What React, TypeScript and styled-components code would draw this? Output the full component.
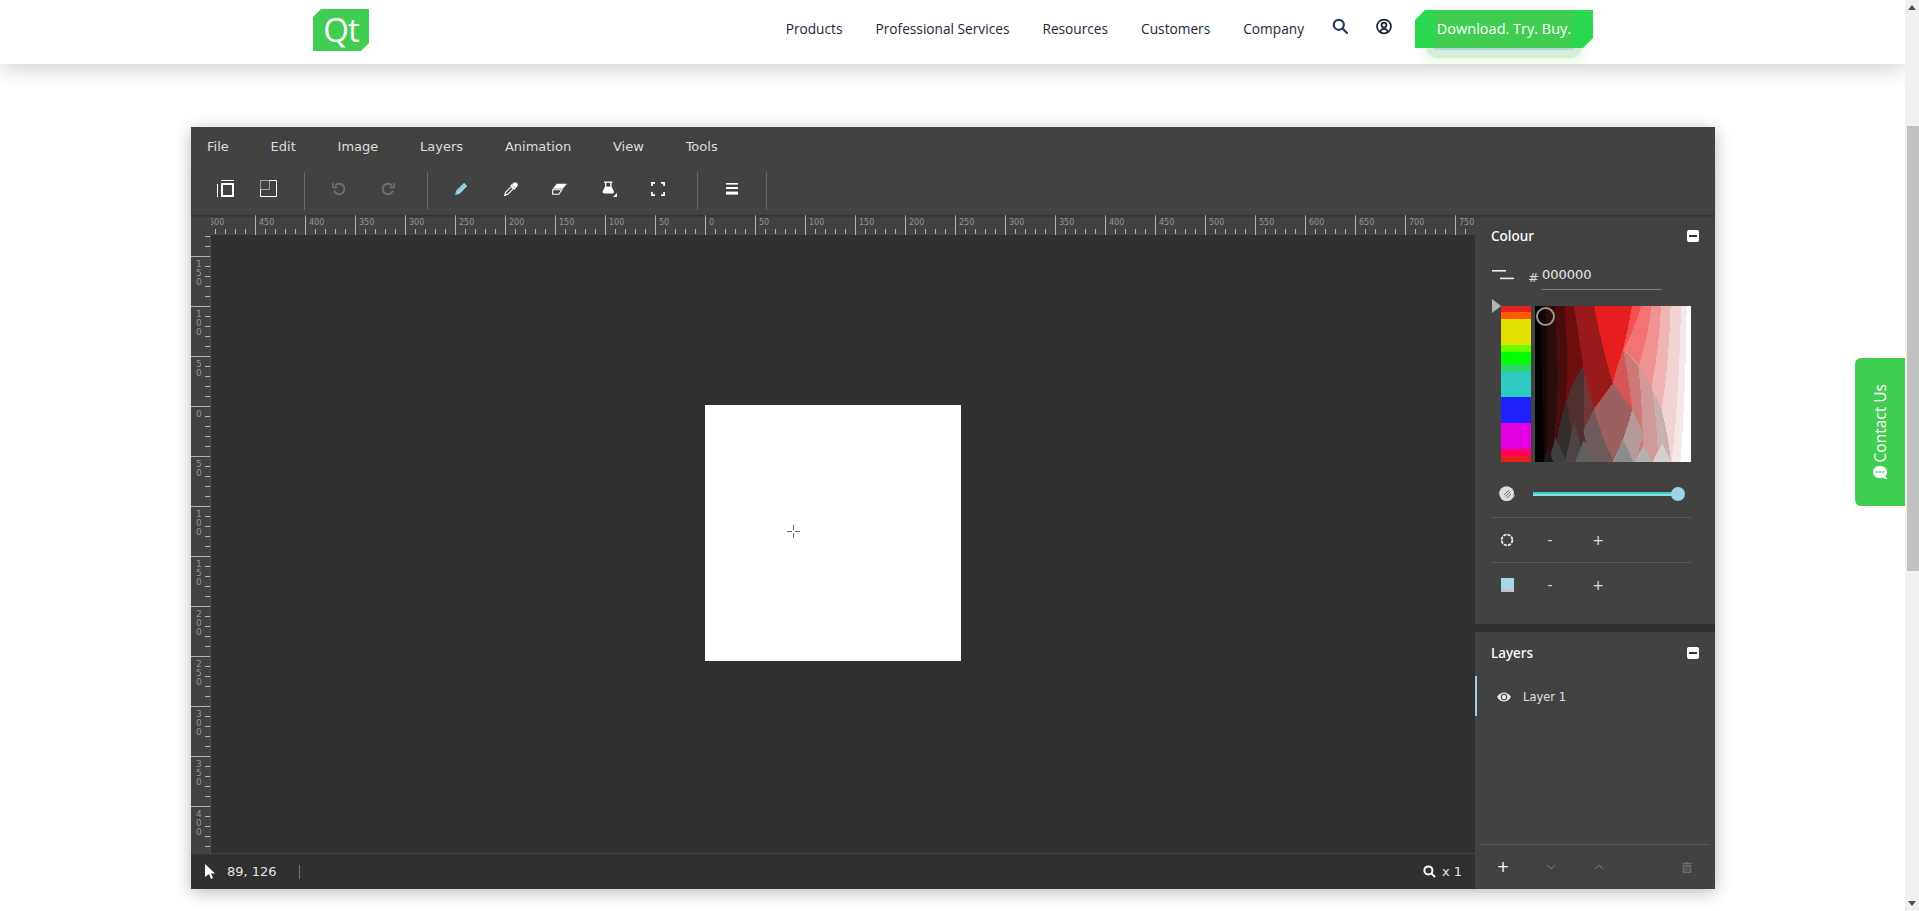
import React from "react";
import styled, { createGlobalStyle } from "styled-components";

const GlobalStyle = createGlobalStyle`
  html, body {
    margin: 0;
    height: 100%;
    overflow: hidden;
    background: #fff;
  }
`;

const NAV = ["Products", "Professional Services", "Resources", "Customers", "Company"];
const MENU = ["File", "Edit", "Image", "Layers", "Animation", "View", "Tools"];

const H_LABELS = [500, 450, 400, 350, 300, 250, 200, 150, 100, 50, 0, 50, 100, 150, 200, 250, 300, 350, 400, 450, 500, 550, 600, 650, 700, 750];
const V_LABELS = [200, 150, 100, 50, 0, 50, 100, 150, 200, 250, 300, 350, 400];

const HUES: [string, number][] = [
  ["#e6201c", 6],
  ["#ff5c00", 7],
  ["#e2e200", 26],
  ["#66ff00", 7],
  ["#00ff00", 12],
  ["#2ed85a", 7],
  ["#2ecbc0", 26],
  ["#2020ff", 26],
  ["#e000e0", 26],
  ["#ff0060", 7],
  ["#e6201c", 6],
];

// posterised saturation / value square, painted back to front
const SV_SHAPES: [string, string][] = [
  ["#ffffff", "M0 0H468V468H0Z"],
  ["#f6e8e8", "M0 0H455Q452 280 436 468H0Z"],
  ["#f0d4d4", "M0 0H438Q432 280 410 468H0Z"],
  ["#f0b4b4", "M0 0H407Q402 170 380 312V468H0Z"],
  ["#ef9292", "M0 0H378Q372 130 350 242V468H0Z"],
  ["#f37272", "M0 0H350Q338 100 310 182V468H0Z"],
  ["#f45050", "M0 0H318Q298 70 265 132V468H0Z"],
  ["#e61e1e", "M0 0H291Q272 120 233 232V468H0Z"],
  ["#981a1a", "M0 0H177Q198 110 233 232L175 310V468H0Z"],
  ["#6e0f0f", "M0 0H117Q132 90 145 182L100 300L80 468H0Z"],
  ["#4a0c0c", "M0 0H88Q102 170 92 280L62 468H0Z"],
  ["#2a0d0d", "M0 0H60Q72 180 66 300L52 468H0Z"],
  ["#120606", "M0 0H33Q40 200 34 468H0Z"],
  ["#000000", "M0 0H15L27 468H0Z"],
  // left lobe
  ["#4e3030", "M145 182Q112 225 95 282Q68 370 55 468H235L177 310Q160 250 145 182Z"],
  ["#713636", "M145 182Q150 250 147 372L177 310Q160 250 145 182Z"],
  // right lobe, outer band first
  ["#c9b0b0", "M265 132Q330 190 380 312Q400 390 408 468H233V232Q245 180 265 132Z"],
  ["#d09a9a", "M265 132Q310 160 350 242Q365 330 370 468H233V232Q245 180 265 132Z"],
  ["#cf7878", "M265 132Q290 155 310 182Q322 280 325 468H233V232Q245 180 265 132Z"],
  ["#d65656", "M265 132Q282 220 292 310L233 400V232Q245 180 265 132Z"],
  // centre lozenge and what sits below it
  ["#b49a9a", "M292 310L326 385L300 468H235Z"],
  ["#9c6060", "M233 232L292 310Q270 400 235 462Q195 390 177 310Z"],
  ["#6e5a5a", "M177 310Q198 390 235 462V468H165L145 372Z"],
  // lower greys
  ["#352c2c", "M95 282Q70 370 55 468H112Q112 380 95 282Z"],
  ["#3e3e3e", "M62 395L40 468H95Z"],
  ["#1a1a1a", "M36 420L27 468H55Z"],
  ["#4c4444", "M118 345L90 468H148Z"],
  ["#606060", "M147 400L120 468H175Z"],
  ["#8c8c8c", "M265 402L235 468H295Z"],
  ["#b2b2b2", "M325 418L298 468H352Z"],
  ["#d4d0d0", "M382 412L352 468H410Z"],
];

export default function App() {
  return (
    <Page>
      <GlobalStyle />
      <Header>
        <Logo>Qt</Logo>
        <Nav>
          {NAV.map((item) => (
            <NavLink key={item}>{item}</NavLink>
          ))}
        </Nav>
        <HeaderIcon>
          <svg width="16" height="16" viewBox="0 0 16 16" fill="none" stroke="#2c3763" strokeWidth="2.2">
            <circle cx="6.8" cy="6.8" r="5" />
            <path d="M10.6 10.6L15 15" strokeLinecap="round" />
          </svg>
        </HeaderIcon>
        <HeaderIcon>
          <svg width="17" height="17" viewBox="0 0 17 17" fill="none" stroke="#1b2138" strokeWidth="1.8">
            <circle cx="8.5" cy="8.5" r="7.4" />
            <circle cx="8.5" cy="7" r="2.6" />
            <path d="M4.6 14C5.4 11.6 6.8 11 8.5 11S11.6 11.6 12.4 14" />
          </svg>
        </HeaderIcon>
        <CtaWrap>
          <Cta>Download. Try. Buy.</Cta>
        </CtaWrap>
      </Header>

      <Editor>
        <MenuBar>
          {MENU.map((item) => (
            <MenuItem key={item}>{item}</MenuItem>
          ))}
        </MenuBar>
        <Toolbar>
          <ToolGroup $width={114} $pad={13}>
            <ToolButton $size={43}>
              <svg width="17" height="17" viewBox="0 0 17 17" fill="none" stroke="#fff">
                <path d="M4 0.5H17M0.5 4V17" />
                <rect x="5" y="4" width="11" height="12" strokeWidth="2" />
              </svg>
            </ToolButton>
            <ToolButton $size={43}>
              <svg width="17" height="17" viewBox="0 0 17 17" fill="none" stroke="#fff">
                <path d="M9.5 0.5H16.5V16.5H0.5V9.5" />
                <path d="M0.5 0.5H9.5V9.5H0.5Z" strokeDasharray="1 1" />
              </svg>
            </ToolButton>
          </ToolGroup>
          <ToolGroup $width={123} $pad={9}>
            <ToolButton>
              <svg width="14" height="14" viewBox="0 0 14 14" fill="none" stroke="#707070" strokeWidth="2">
                <path d="M3.2 3.6A5.2 5.2 0 1 1 2.2 8.5" />
                <path d="M1 1V5.4H5.4" strokeWidth="1.6" />
              </svg>
            </ToolButton>
            <ToolButton>
              <svg width="14" height="14" viewBox="0 0 14 14" fill="none" stroke="#707070" strokeWidth="2">
                <path d="M10.8 3.6A5.2 5.2 0 1 0 11.8 8.5" />
                <path d="M13 1V5.4H8.6" strokeWidth="1.6" />
              </svg>
            </ToolButton>
          </ToolGroup>
          <ToolGroup $width={270} $pad={9}>
            <ToolButton>
              <svg width="13" height="13" viewBox="0 0 14 14">
                <path d="M0.5 13.5L1.6 9.4L9.8 1.2L13 4.4L4.8 12.6Z" fill="#a6d9ea" stroke="#52c6de" strokeWidth="0.8" />
                <path d="M3.4 10.2L10.4 3.2" stroke="#5b93a6" strokeWidth="0.7" />
              </svg>
            </ToolButton>
            <ToolButton>
              <svg width="14" height="14" viewBox="0 0 14 14">
                <path d="M8 2.6C9.6 0 11.6 -0.4 13 1S14.2 4.4 11.4 6Z" fill="#fff" />
                <path d="M6.8 2.8L11.2 7.2" stroke="#fff" strokeWidth="1.6" />
                <path d="M7.4 4.6L1.8 10.2L0.6 13.4L3.8 12.2L9.4 6.6Z" fill="#424242" stroke="#fff" strokeWidth="1.2" />
              </svg>
            </ToolButton>
            <ToolButton>
              <svg width="15" height="12" viewBox="0 0 14 11">
                <path d="M4.4 0.5H14L10 5.2H0.6Z" fill="#fff" />
                <path d="M0.6 6.2H9.2L6.4 10.4H0.6Z" fill="#424242" stroke="#fff" />
              </svg>
            </ToolButton>
            <ToolButton $nudge={2}>
              <svg width="16" height="16" viewBox="0 0 16 16">
                <path d="M2 0.5H10.5V1.8H9.5V5.6L11.8 10.2C12.3 11.2 11.6 12.4 10.5 12.4H2C0.9 12.4 0.2 11.2 0.7 10.2L3 5.6V1.8H2Z" fill="#fff" />
                <path d="M4.3 1.8H8.2V5.6H4.3Z" fill="#424242" />
                <path d="M15 12V16H11Z" fill="#fff" />
              </svg>
            </ToolButton>
            <ToolButton>
              <svg width="14" height="14" viewBox="0 0 14 14" fill="none" stroke="#fff" strokeWidth="1.7">
                <path d="M0.9 4V0.9H4M10 0.9H13.1V4M13.1 10V13.1H10M4 13.1H0.9V10" />
              </svg>
            </ToolButton>
          </ToolGroup>
          <ToolGroup $width={69} $pad={10}>
            <ToolButton>
              <svg width="13" height="12" viewBox="0 0 13 12" fill="#fff">
                <rect x="0" y="0" width="12" height="1.6" />
                <rect x="0" y="4" width="12" height="2" />
                <rect x="0" y="8.6" width="12" height="3" />
              </svg>
            </ToolButton>
          </ToolGroup>
        </Toolbar>

        <Workspace>
          <Stage>
            <HRuler>
              <HTrack>
                {H_LABELS.map((value, i) => (
                  <HCell key={i}>{value}</HCell>
                ))}
              </HTrack>
            </HRuler>
            <StageBody>
              <VRuler>
                <VTrack>
                  {V_LABELS.map((value, i) => (
                    <VCell key={i}>
                      <VLabel>{value}</VLabel>
                    </VCell>
                  ))}
                </VTrack>
              </VRuler>
              <Viewport>
                <Canvas>
                  <Crosshair>
                    <svg width="13" height="13" viewBox="0 0 13 13" stroke="#667" strokeWidth="1">
                      <path d="M6.5 0V5M6.5 8V13M0 6.5H5M8 6.5H13" />
                    </svg>
                  </Crosshair>
                </Canvas>
              </Viewport>
            </StageBody>
            <StatusBar>
              <svg width="10" height="15" viewBox="0 0 10 15" fill="#fff">
                <path d="M0 0L10 9.4H6L8 14L6 15L4 10L0 13Z" />
              </svg>
              <Coords>89, 126</Coords>
              <StatusDivider />
              <ZoomInfo>
                <svg width="13" height="13" viewBox="0 0 13 13" fill="none" stroke="#fff" strokeWidth="2">
                  <circle cx="5.4" cy="5.4" r="4" />
                  <path d="M8.4 8.4L12 12" />
                </svg>
                x 1
              </ZoomInfo>
            </StatusBar>
          </Stage>

          <Panel>
            <ColourSection>
              <SectionHeader>
                <SectionTitle>Colour</SectionTitle>
                <Collapse />
              </SectionHeader>
              <HexRow>
                <svg width="22" height="10" viewBox="0 0 22 10" fill="#eee">
                  <rect x="0" y="0" width="14" height="1.6" />
                  <rect x="8" y="7.6" width="14" height="1.6" />
                </svg>
                <Hash>#</Hash>
                <HexValue>000000</HexValue>
              </HexRow>
              <PickerRow>
                <HueArrow />
                <HueStrip>
                  {HUES.map(([colour, height], i) => (
                    <HueBand key={i} $colour={colour} $height={height} />
                  ))}
                </HueStrip>
                <SvSquare>
                  <svg width="156" height="156" viewBox="0 0 468 468" shapeRendering="crispEdges">
                    {SV_SHAPES.map(([fill, d], i) => (
                      <path key={i} fill={fill} d={d} />
                    ))}
                  </svg>
                  <SvMarker />
                </SvSquare>
              </PickerRow>
              <SliderRow>
                <IconCell>
                  <svg width="16" height="16" viewBox="0 0 16 16">
                    <circle cx="7.6" cy="7.6" r="7.4" fill="#dcdcdc" />
                    <path d="M2.4 12.6A8 8 0 0 0 15.4 9" stroke="#dcdcdc" strokeWidth="1" fill="none" />
                    <path d="M5 9L10 4M6.5 10.5L11.5 5.5M8 12L12 8" stroke="#6a6a6a" strokeWidth="1" />
                  </svg>
                </IconCell>
                <SliderTrack>
                  <SliderKnob />
                </SliderTrack>
              </SliderRow>
              <StepRow $divided>
                <IconCell>
                  <svg width="14" height="14" viewBox="0 0 14 14" fill="none" stroke="#eee">
                    <circle cx="7" cy="7" r="5.4" strokeWidth="1.8" strokeDasharray="3.2 1" />
                  </svg>
                </IconCell>
                <StepButton>-</StepButton>
                <StepButton>+</StepButton>
              </StepRow>
              <StepRow>
                <IconCell>
                  <BrushSwatch />
                </IconCell>
                <StepButton>-</StepButton>
                <StepButton>+</StepButton>
              </StepRow>
            </ColourSection>

            <LayersSection>
              <SectionHeader>
                <SectionTitle>Layers</SectionTitle>
                <Collapse />
              </SectionHeader>
              <LayerRow>
                <svg width="14" height="10" viewBox="0 0 14 10" fill="#e8e8e8">
                  <path d="M0 5C2 2 4.4 0.4 7 0.4S12 2 14 5C12 8 9.6 9.6 7 9.6S2 8 0 5ZM7 1.8A3.2 3.2 0 1 0 7 8.2A3.2 3.2 0 1 0 7 1.8Z" fillRule="evenodd" />
                  <circle cx="7" cy="5" r="2.2" />
                </svg>
                <LayerName>Layer 1</LayerName>
              </LayerRow>
              <LayerFooter>
                <FooterButton $on>+</FooterButton>
                <FooterButton>
                  <svg width="10" height="6" viewBox="0 0 10 6" fill="none" stroke="#6c6c6c" strokeWidth="1.2">
                    <path d="M1 1L5 5L9 1" />
                  </svg>
                </FooterButton>
                <FooterButton>
                  <svg width="10" height="6" viewBox="0 0 10 6" fill="none" stroke="#6c6c6c" strokeWidth="1.2">
                    <path d="M1 5L5 1L9 5" />
                  </svg>
                </FooterButton>
                <FooterSpacer />
                <FooterButton>
                  <svg width="10" height="11" viewBox="0 0 10 11" fill="#6c6c6c">
                    <path d="M3.5 0H6.5V1H10V2H0V1H3.5Z" />
                    <path d="M0.8 2.8H9.2V11H0.8ZM2.6 4V10H3.6V4ZM4.5 4V10H5.5V4ZM6.4 4V10H7.4V4Z" fillRule="evenodd" />
                  </svg>
                </FooterButton>
              </LayerFooter>
            </LayersSection>
          </Panel>
        </Workspace>
      </Editor>

      <ContactTab>
        <ContactLabel>Contact Us</ContactLabel>
        <svg width="15" height="14" viewBox="0 0 15 14">
          <path d="M7 0C10.8 0 14 2.6 14 6C14 7.6 13.4 9 12.2 10L14.6 13.4L9.6 11.7C8.8 11.9 7.9 12 7 12C3.2 12 0 9.4 0 6S3.2 0 7 0Z" fill="#fff" />
          <circle cx="3.8" cy="6" r="1" fill="#41cd52" />
          <circle cx="7" cy="6" r="1" fill="#41cd52" />
          <circle cx="10.2" cy="6" r="1" fill="#41cd52" />
        </svg>
      </ContactTab>

      <ScrollRail>
        <ScrollArrow $dir="up" />
        <ScrollThumb />
        <ScrollArrow $dir="down" />
      </ScrollRail>
    </Page>
  );
}

const Page = styled.div`
  height: 911px;
  padding-right: 14px;
  background: #fff;
  font-family: "DejaVu Sans", sans-serif;
`;

const Header = styled.header`
  height: 64px;
  box-sizing: border-box;
  padding: 0 312px 0 313px;
  display: flex;
  align-items: center;
  background: #fff;
  box-shadow: 0 4px 22px rgba(50, 55, 70, 0.24);
`;

const Logo = styled.div`
  width: 56px;
  height: 42px;
  margin-top: -4px;
  display: flex;
  align-items: center;
  justify-content: center;
  background: #41cd52;
  color: #fff;
  font: 500 33px/42px "Open Sans", sans-serif;
  letter-spacing: -1px;
  clip-path: polygon(8px 0, 100% 0, 100% calc(100% - 8px), calc(100% - 8px) 100%, 0 100%, 0 8px);
`;

const Nav = styled.nav`
  margin: -7px 0 0 auto;
  display: flex;
  gap: 33px;
`;

const NavLink = styled.a`
  font: 400 13.7px/20px "Open Sans", sans-serif;
  color: #23273a;
`;

const HeaderIcon = styled.span`
  width: 16px;
  height: 17px;
  margin-left: 28px;
  margin-top: -11px;
  display: flex;
`;

const CtaWrap = styled.div`
  position: relative;
  margin: -6px 0 0 23px;

  &::before {
    content: "";
    position: absolute;
    left: 15px;
    right: 15px;
    top: 8px;
    bottom: -2px;
    border-radius: 8px;
    background: #a8d8e0;
    box-shadow: 0 4px 0 4px #d5ecd5, 0 3px 10px 10px rgba(65, 205, 82, 0.12);
  }
`;

const Cta = styled.div`
  position: relative;
  width: 178px;
  height: 38px;
  display: flex;
  align-items: center;
  justify-content: center;
  font: 500 14.5px/20px "Open Sans", sans-serif;
  color: #fff;
  background: linear-gradient(
    to right,
    #2cd84f 0,
    #2cd84f 20px,
    #41cd52 20px,
    #41cd52 156px,
    #2cd84f 156px
  );
  clip-path: polygon(10px 0, 100% 0, 100% calc(100% - 10px), calc(100% - 10px) 100%, 0 100%, 0 10px);
`;

const Editor = styled.main`
  width: 1524px;
  height: 762px;
  margin: 63px 0 0 191px;
  display: flex;
  flex-direction: column;
  background: #303030;
  color: #e4e4e4;
  box-shadow: 0 3px 16px rgba(0, 0, 0, 0.28);
`;

const MenuBar = styled.div`
  height: 40px;
  box-sizing: border-box;
  padding: 0 0 1px 16px;
  display: flex;
  align-items: center;
  gap: 41.8px;
  background: #424242;
`;

const MenuItem = styled.span`
  font-size: 13px;
  color: #dedede;
`;

const Toolbar = styled.div`
  position: relative;
  height: 48px;
  box-sizing: border-box;
  padding: 5px 0;
  display: flex;
  background: #424242;
  box-shadow: 0 2px 2px -1px rgba(0, 0, 0, 0.35);
  z-index: 1;
`;

const ToolGroup = styled.div<{ $width: number; $pad: number }>`
  width: ${({ $width }) => $width}px;
  box-sizing: border-box;
  padding-left: ${({ $pad }) => $pad}px;
  display: flex;
  border-right: 1px solid #6a6a6a;
`;

const ToolButton = styled.span<{ $size?: number; $nudge?: number }>`
  width: ${({ $size }) => $size ?? 49}px;
  height: 33px;
  padding-left: ${({ $nudge }) => $nudge ?? 0}px;
  box-sizing: border-box;
  display: flex;
  align-items: center;
  justify-content: center;
`;

const Workspace = styled.div`
  flex: 1;
  min-height: 0;
  display: flex;
`;

const Stage = styled.div`
  flex: 1;
  min-width: 0;
  display: flex;
  flex-direction: column;
`;

const HRuler = styled.div`
  height: 20px;
  padding-left: 20px;
  background: #424242;
`;

const HTrack = styled.div`
  height: 100%;
  overflow: hidden;
  display: flex;

  > :first-child {
    margin-left: -6px;
  }
`;

const HCell = styled.div`
  flex: 0 0 50px;
  box-sizing: border-box;
  height: 20px;
  padding: 2px 0 0 3px;
  border-left: 1px solid #b5b5b5;
  font-size: 8px;
  line-height: 11px;
  color: #969696;
  background: linear-gradient(to right, #b5b5b5 1px, transparent 1px) 9px 14px / 10px 5px repeat-x;
`;

const StageBody = styled.div`
  flex: 1;
  min-height: 0;
  display: flex;
`;

const VRuler = styled.div`
  width: 20px;
  box-sizing: border-box;
  overflow: hidden;
  background: #424242;
  border-right: 1px solid #4c4c4c;
`;

const VTrack = styled.div`
  margin-top: -29px;
`;

const VCell = styled.div`
  box-sizing: border-box;
  height: 50px;
  padding: 3px 0 0 5px;
  border-top: 1px solid #b5b5b5;
  background: linear-gradient(to bottom, #b5b5b5 1px, transparent 1px) 100% 9px / 5px 10px repeat-y;
`;

const VLabel = styled.div`
  width: 6px;
  font-size: 9px;
  line-height: 9px;
  word-break: break-all;
  color: #969696;
`;

const Viewport = styled.div`
  flex: 1;
  padding: 170px 0 0 494px;
  background: #303030;
`;

const Canvas = styled.div`
  position: relative;
  width: 256px;
  height: 256px;
  background: #fff;
`;

const Crosshair = styled.div`
  position: absolute;
  left: 82px;
  top: 120px;
  display: flex;
`;

const StatusBar = styled.div`
  height: 36px;
  box-sizing: border-box;
  padding: 0 13px 0 14px;
  display: flex;
  align-items: center;
  background: #303030;
  border-top: 1px solid #444;
`;

const Coords = styled.span`
  margin-left: 12px;
  font-size: 13px;
`;

const StatusDivider = styled.span`
  width: 1px;
  height: 14px;
  margin-left: 22px;
  background: #777;
`;

const ZoomInfo = styled.span`
  margin-left: auto;
  display: flex;
  align-items: center;
  gap: 6px;
  font-size: 13px;
`;

const Panel = styled.aside`
  flex: 0 0 240px;
  display: flex;
  flex-direction: column;
  gap: 8px;
  background: #303030;
`;

const ColourSection = styled.section`
  height: 409px;
  background: #424242;
`;

const LayersSection = styled.section`
  flex: 1;
  min-height: 0;
  display: flex;
  flex-direction: column;
  background: #424242;
`;

const SectionHeader = styled.div`
  height: 44px;
  box-sizing: border-box;
  padding: 0 16px 2px;
  display: flex;
  align-items: center;
  justify-content: space-between;
`;

const SectionTitle = styled.h3`
  margin: 0;
  font: 500 13.5px/20px "Noto Sans", sans-serif;
  color: #fff;
`;

const Collapse = styled.span`
  width: 12px;
  height: 12px;
  box-sizing: border-box;
  border-radius: 2px;
  background: linear-gradient(#333, #333) center / 8px 2px no-repeat #fff;
`;

const HexRow = styled.div`
  height: 31px;
  padding-left: 17px;
  display: flex;
  align-items: center;
`;

const Hash = styled.span`
  margin: 6px 0 0 14px;
  font-size: 13px;
  color: #ddd;
`;

const HexValue = styled.span`
  width: 120px;
  height: 30px;
  margin-left: 3px;
  box-sizing: border-box;
  font-size: 13px;
  line-height: 30px;
  color: #e8e8e8;
  border-bottom: 1px solid #808080;
`;

const PickerRow = styled.div`
  height: 163px;
  margin-top: 9px;
  padding-left: 17px;
  display: flex;
`;

const HueArrow = styled.span`
  width: 0;
  height: 0;
  border-left: 9px solid #b5b5b5;
  border-top: 7px solid transparent;
  border-bottom: 7px solid transparent;
`;

const HueStrip = styled.div`
  width: 30px;
  height: 156px;
  margin-top: 7px;
  display: flex;
  flex-direction: column;
`;

const HueBand = styled.div<{ $colour: string; $height: number }>`
  height: ${({ $height }) => $height}px;
  background: ${({ $colour }) => $colour};
`;

const SvSquare = styled.div`
  position: relative;
  width: 156px;
  height: 156px;
  margin: 7px 0 0 4px;

  svg {
    display: block;
  }
`;

const SvMarker = styled.span`
  position: absolute;
  left: 1px;
  top: 1px;
  width: 19px;
  height: 19px;
  box-sizing: border-box;
  border: 2px solid #9c9494;
  border-radius: 50%;
`;

const SliderRow = styled.div`
  height: 40px;
  box-sizing: border-box;
  margin: 16px 24px 0 16px;
  padding-bottom: 8px;
  display: flex;
  align-items: center;
  border-bottom: 1px solid #585858;
`;

const IconCell = styled.div`
  flex: 0 0 32px;
  display: flex;
  align-items: center;
  justify-content: center;
`;

const SliderTrack = styled.div`
  position: relative;
  width: 147px;
  height: 4px;
  margin-left: 10px;
  background: linear-gradient(#34d0d0 50%, #8fdae4 50%);
`;

const SliderKnob = styled.span`
  position: absolute;
  right: -5px;
  top: -5px;
  width: 14px;
  height: 14px;
  border-radius: 50%;
  background: #9fd3e8;
`;

const StepRow = styled.div<{ $divided?: boolean }>`
  height: ${({ $divided }) => ($divided ? 45 : 44)}px;
  box-sizing: border-box;
  margin: 0 24px 0 16px;
  display: flex;
  align-items: center;
  border-bottom: ${({ $divided }) => ($divided ? "1px solid #585858" : "none")};
`;

const StepButton = styled.span`
  flex: 0 0 48px;
  font-size: 14px;
  line-height: 20px;
  text-align: center;
  color: #dcdcdc;

  &:first-of-type {
    margin-left: 3px;
  }
`;

const BrushSwatch = styled.span`
  width: 13px;
  height: 14px;
  background: linear-gradient(#a3d8ea 80%, #c4c4c4 80%);
`;

const LayerRow = styled.div`
  height: 40px;
  box-sizing: border-box;
  padding: 2px 0 0 20px;
  display: flex;
  align-items: center;
  gap: 12px;
  border-left: 2px solid #9fd3e8;
`;

const LayerName = styled.span`
  font-size: 11.5px;
  color: #e0e0e0;
`;

const LayerFooter = styled.div`
  height: 45px;
  box-sizing: border-box;
  margin: auto 6px 0;
  display: flex;
  align-items: center;
  gap: 4px;
  border-top: 1px solid #585858;
`;

const FooterButton = styled.span<{ $on?: boolean }>`
  flex: 0 0 44px;
  display: flex;
  justify-content: center;
  font-size: 15px;
  line-height: 20px;
  color: ${({ $on }) => ($on ? "#fff" : "#6c6c6c")};
`;

const FooterSpacer = styled.span`
  flex: 1;
`;

const ContactTab = styled.aside`
  position: fixed;
  right: 14px;
  top: 358px;
  width: 50px;
  height: 148px;
  box-sizing: border-box;
  padding-bottom: 26px;
  display: flex;
  flex-direction: column;
  align-items: center;
  justify-content: flex-end;
  gap: 4px;
  background: #41cd52;
  border-radius: 6px 0 0 6px;
`;

const ContactLabel = styled.span`
  writing-mode: vertical-rl;
  transform: rotate(180deg);
  font: 500 15.5px/20px "Open Sans", sans-serif;
  color: #fff;
`;

const ScrollRail = styled.div`
  position: fixed;
  right: 0;
  top: 0;
  bottom: 0;
  width: 14px;
  display: flex;
  flex-direction: column;
  align-items: flex-end;
  background: #f1f1f1;
`;

const ScrollArrow = styled.span<{ $dir: "up" | "down" }>`
  width: 0;
  height: 0;
  margin: ${({ $dir }) => ($dir === "up" ? "5px 3px 0 0" : "auto 3px 5px 0")};
  border-left: 4px solid transparent;
  border-right: 4px solid transparent;
  border-${({ $dir }) => ($dir === "up" ? "bottom" : "top")}: 5px solid #505050;
`;

const ScrollThumb = styled.div`
  width: 12px;
  height: 445px;
  margin-top: 116px;
  background: #c1c1c1;
`;
